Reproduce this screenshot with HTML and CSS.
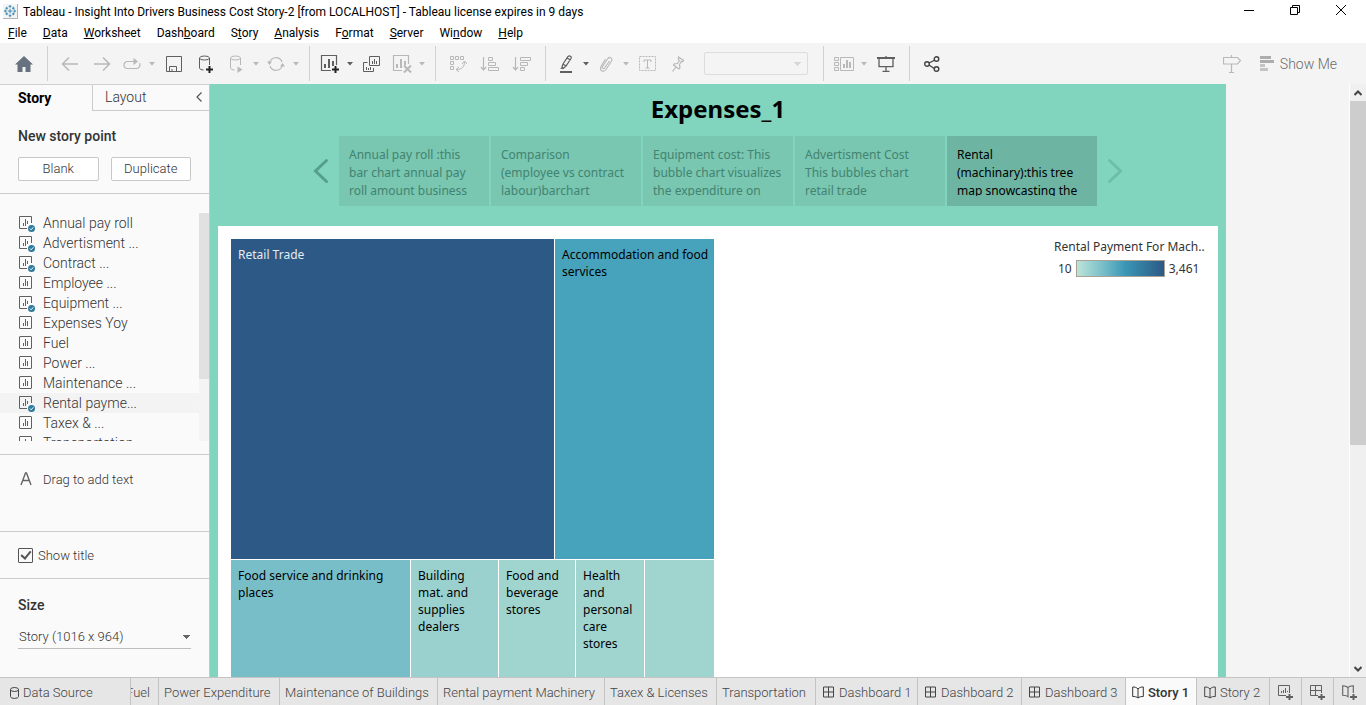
FILE: index.html
```html
<!DOCTYPE html>
<html lang="en">
<head>
<meta charset="utf-8">
<title>Tableau - Insight Into Drivers Business Cost Story-2</title>
<link rel="stylesheet" href="styles.css">
</head>
<body>
<svg class="defs" aria-hidden="true">
  <symbol id="caret" viewBox="0 0 6 4"><path d="M0 0h6L3 3.5z" fill="currentColor"/></symbol>
  <symbol id="sheet" viewBox="0 0 16 16"><rect x=".5" y=".5" width="12" height="12" rx=".5" fill="none" stroke="currentColor"/><path d="M4.500 7v3M6.500 3v7M8.500 5v5" stroke="currentColor" fill="none"/></symbol>
  <symbol id="sheet-used" viewBox="0 0 16 16"><path d="M8 12.500H.5V.5h12V7M4.500 7v3M6.500 3v7M8.500 5v3" stroke="currentColor" fill="none"/><circle cx="12.500" cy="12.500" r="3.500" fill="#2e7a9c"/><path d="M10.800 12.500l1.300 1.300 2.200-2.500" stroke="#fff" fill="none"/></symbol>
  <symbol id="dash" viewBox="0 0 12 12"><path d="M.5.5h10v10H.5zM5.500.5v10M.5 5.500h10" stroke="currentColor" fill="none"/></symbol>
  <symbol id="book" viewBox="0 0 12 13"><path d="M6 3C4.500 1.200 2.500 1 .7 1v9.500c2 0 4 .2 5.300 1.500C7.300 10.700 9.300 10.500 11.300 10.500V1C9.500 1 7.500 1.200 6 3zM6 3v9" stroke="currentColor" fill="none"/></symbol>
</svg>

<header class="titlebar">
  <svg class="logo" viewBox="0 0 16 16"><rect width="15" height="15" fill="#f4f4f4"/><path d="M15.500 0v15.500H0" stroke="#aaa" fill="none"/><path d="M7.500 5v5M5 7.500h5M7.500 1v3M6 2.500h3M7.500 11v3M6 12.500h3M2.500 6v3M1 7.500h3M12.500 6v3M11 7.500h3M4 3v3M2.500 4.500h3M11 3v3M9.500 4.500h3M4 9v3M2.500 10.500h3M11 9v3M9.500 10.500h3" stroke="#3384b5" fill="none"/></svg>
  <span class="caption">Tableau - Insight Into Drivers Business Cost Story-2 [from LOCALHOST] - Tableau license expires in 9 days</span>
  <div class="window-buttons">
    <button aria-label="Minimize"><svg width="12" height="12"><path d="M1 6.500h10" stroke="#000"/></svg></button>
    <button aria-label="Restore"><svg width="12" height="12"><path d="M1.500 3.500h7v7h-7zM3.500 3.500v-2h7v7h-2" stroke="#000" fill="none"/></svg></button>
    <button aria-label="Close"><svg width="12" height="12"><path d="M1 1l10 10M11 1L1 11" stroke="#000"/></svg></button>
  </div>
</header>

<nav class="menu">
  <button><u>F</u>ile</button><button><u>D</u>ata</button><button><u>W</u>orksheet</button><button>Dash<u>b</u>oard</button><button>S<u>t</u>ory</button><button><u>A</u>nalysis</button><button>F<u>o</u>rmat</button><button><u>S</u>erver</button><button>Wi<u>n</u>dow</button><button><u>H</u>elp</button>
</nav>

<div class="toolbar">
  <div class="group home">
    <button class="tool" aria-label="Start page"><svg width="18" height="16"><path d="M9 0L0 8.500h2.500V16h5v-5h3v5h5V8.500H18z" fill="#66727f"/></svg></button>
  </div>
  <div class="group off">
    <button class="tool" aria-label="Undo"><svg width="18" height="16"><path d="M17 8H2M8 1.500L1.500 8 8 14.500" stroke="currentColor" stroke-width="1.500" fill="none"/></svg></button>
    <button class="tool" aria-label="Redo"><svg width="18" height="16"><path d="M1 8h15M10 1.500L16.500 8 10 14.500" stroke="currentColor" stroke-width="1.500" fill="none"/></svg></button>
    <button class="tool mid" aria-label="Replay"><svg width="18" height="12"><path d="M12 3.500H4.500a3.500 3.500 0 0 0 0 7h9a3.500 3.500 0 0 0 3-5.200" stroke="currentColor" stroke-width="1.200" fill="none"/><path d="M10.500 0l4.500 3.500L10.500 7z" fill="currentColor"/></svg></button>
    <button class="drop" aria-label="Replay options"><svg><use href="#caret"/></svg></button>
    <button class="tool on" aria-label="Save"><svg width="16" height="16"><path d="M.5.5h15v15H.5zM3.500 15.500v-5h7v5M6 15.500V13" stroke="currentColor" fill="none"/></svg></button>
    <button class="tool on" aria-label="New data source"><svg width="16" height="18"><path d="M1.500 3v10c0 1 2 2 4 2M11.500 3v7" stroke="currentColor" fill="none"/><ellipse cx="6.500" cy="3" rx="5" ry="2" stroke="currentColor" fill="none"/><path d="M11.500 11v7M8 14.500h7" stroke="#222" stroke-width="2"/></svg></button>
    <button class="tool mid" aria-label="Pause updates"><svg width="14" height="18"><path d="M1.500 3v10c0 1 2 2 4 2M11.500 3v7" stroke="currentColor" fill="none"/><ellipse cx="6.500" cy="3" rx="5" ry="2" stroke="currentColor" fill="none"/><path d="M8.500 11.500l5 3-5 3.500z" fill="currentColor"/></svg></button>
    <button class="drop" aria-label="Update options"><svg><use href="#caret"/></svg></button>
    <button class="tool mid" aria-label="Refresh"><svg width="18" height="16"><path d="M2.500 7A6.500 6.500 0 0 1 15 6M15.500 9A6.500 6.500 0 0 1 3 10" stroke="currentColor" stroke-width="1.200" fill="none"/><path d="M0 5.500h5L2.500 9zM13 10.500h5L15.500 7z" fill="currentColor"/></svg></button>
    <button class="drop" aria-label="Refresh options"><svg><use href="#caret"/></svg></button>
  </div>
  <div class="group">
    <button class="tool mid" aria-label="New worksheet"><svg width="20" height="18"><path d="M11 15.500H1.500V.5h15V10" stroke="currentColor" stroke-width="1.200" fill="none"/><path d="M5 9v4M9 4v9M13 6v5" stroke="currentColor" stroke-width="2"/><path d="M15.500 11v7M12 14.500h7" stroke="#222" stroke-width="2"/></svg></button>
    <button class="drop" aria-label="New sheet options"><svg><use href="#caret"/></svg></button>
    <button class="tool" aria-label="Duplicate"><svg width="18" height="16"><path d="M6.500.5h10v9h-10zM4.500 6.500h-4v9h10V12M9.500 5v3M11.500 3v5M13.500 5v3M3.500 11v3M5.500 12v2M7.500 11v3" stroke="currentColor" fill="none"/></svg></button>
    <button class="tool mid faint" aria-label="Clear sheet"><svg width="20" height="18"><path d="M10 15.500H1.500V.5h15V9" stroke="currentColor" stroke-width="1.200" fill="none"/><path d="M5 9v4M9 4v9M13 6v4M12 10.500l7 7M19 10.500l-7 7" stroke="currentColor" stroke-width="2"/></svg></button>
    <button class="drop faint" aria-label="Clear options"><svg><use href="#caret"/></svg></button>
  </div>
  <div class="group off">
    <button class="tool" aria-label="Swap rows and columns"><svg width="18" height="18"><path d="M1.500 1.500h3v3h-3zM6.500 1.500h3v3h-3zM11.500 1.500h3v3h-3zM1.500 6.500h3v3h-3zM1.500 11.500h3v3h-3zM15.500 6.500c0 5-2 8-8 8M13 9l2.500-3L18 9M10 12l-3 2.500 3 2.500" stroke="currentColor" fill="none"/></svg></button>
    <button class="tool" aria-label="Sort ascending"><svg width="20" height="16"><path d="M3.500 1v13M1 11l2.500 3L6 11" stroke="currentColor" stroke-width="1.200" fill="none"/><path d="M8.500 1.500h4v3h-4zM8.500 6.500h7v3h-7zM8.500 11.500h10v3h-10z" stroke="currentColor" fill="none"/></svg></button>
    <button class="tool" aria-label="Sort descending"><svg width="20" height="16"><path d="M3.500 1v13M1 11l2.500 3L6 11" stroke="currentColor" stroke-width="1.200" fill="none"/><path d="M8.500 1.500h10v3h-10zM8.500 6.500h7v3h-7zM8.500 11.500h4v3h-4z" stroke="currentColor" fill="none"/></svg></button>
  </div>
  <div class="group off">
    <button class="tool mid on" aria-label="Highlight"><svg width="14" height="18"><path d="M3 12l1-3 5-7.500c1.500-1.500 4 0 3 2L7 11l-3 2.500zM4 9l3 2M8 3l3.500 2" stroke="currentColor" stroke-width="1.200" fill="none"/><path d="M1 14l2-2 1 1.500zM1 16h12v2H1z" fill="currentColor"/></svg></button>
    <button class="drop on" aria-label="Highlight options"><svg><use href="#caret"/></svg></button>
    <button class="tool mid" aria-label="Group members"><svg width="14" height="16"><path d="M10.500 5L5.500 12c-1 1.500-3 0-2-1.500l5-7.500c1.500-3 5.500-1 4 2L7 13.500c-2.500 3.500-7 1-5-3L6.500 3" stroke="currentColor" stroke-width="1.100" fill="none"/></svg></button>
    <button class="drop" aria-label="Group options"><svg><use href="#caret"/></svg></button>
    <button class="tool" aria-label="Show mark labels"><svg width="18" height="16"><path d="M.5.5h16v14H.5z" stroke="currentColor" stroke-dasharray="2 1" fill="none"/><path d="M5 6V4h7v2M8.500 4v8M6.500 12h4" stroke="currentColor" fill="none"/></svg></button>
    <button class="tool mid" aria-label="Fix axes"><svg width="14" height="16"><path d="M7.500 1l5 3.500-.8 1.300-1.400-.3-1.800 3 .5 3.300-1 1.200L2.500 9l.8-1.200 3.200-.3 1.800-3-1-1.500zM5 11L1.500 15.500" stroke="currentColor" stroke-width="1.200" fill="none"/></svg></button>
    <select class="fit" aria-label="Fit" disabled><option></option></select>
  </div>
  <div class="group off">
    <button class="tool mid" aria-label="Show cards"><svg width="20" height="16"><path d="M.5 1.500h4v3h-4zM.5 6.500h4v3h-4zM.5 11.500h4v3h-4zM6.500 1.500h13v13h-13z" stroke="currentColor" fill="none"/><path d="M10 8v4M13 4v8M16 6v6" stroke="currentColor" stroke-width="2"/></svg></button>
    <button class="drop" aria-label="Card options"><svg><use href="#caret"/></svg></button>
    <button class="tool on" aria-label="Presentation mode"><svg width="18" height="16"><path d="M0 1h18v2H0z" fill="currentColor"/><path d="M2 2v8.500h14V2M9 0v15M5.500 15.500h7" stroke="currentColor" stroke-width="1.300" fill="none"/><path d="M3 3h12v7H3z" fill="#f4f4f4"/></svg></button>
  </div>
  <div class="group last">
    <button class="tool dark" aria-label="Share"><svg width="16" height="16"><path d="M5 7l6-3M5 9l6 4" stroke="currentColor" stroke-width="1.300"/><g fill="none" stroke="currentColor" stroke-width="1.400"><circle cx="3" cy="8" r="2.300"/><circle cx="12.500" cy="3" r="2.300"/><circle cx="12.500" cy="13" r="2.300"/></g></svg></button>
    <div class="right">
      <button class="tool faint" aria-label="Guide"><svg width="18" height="18"><path d="M8.500 0v2M8.500 9v8M6 17.500h5M.5 2.500h14l3 3-3 3.500H.5z" stroke="currentColor" stroke-width="1.200" fill="none"/></svg></button>
      <button class="showme"><svg width="14" height="15"><path d="M0 0h11v3H0zM0 4h14v3H0z" fill="#adadad"/><path d="M0 8h5v3H0zM0 12h8v3H0z" fill="#c4c4c4"/></svg>Show Me</button>
    </div>
  </div>
</div>

<main class="workspace">
  <aside class="side">
    <div class="side-tabs">
      <button class="current">Story</button>
      <button>Layout<svg width="6" height="10"><path d="M5.500.5L1 5l4.500 4.500" stroke="#555" stroke-width="1.200" fill="none"/></svg></button>
    </div>
    <section class="new-point">
      <h2>New story point</h2>
      <div class="pair"><button>Blank</button><button>Duplicate</button></div>
    </section>
    <section class="sheets">
      <ul>
        <li><svg><use href="#sheet-used"/></svg>Annual pay roll</li>
        <li><svg><use href="#sheet-used"/></svg>Advertisment ...</li>
        <li><svg><use href="#sheet-used"/></svg>Contract ...</li>
        <li><svg><use href="#sheet"/></svg>Employee ...</li>
        <li><svg><use href="#sheet-used"/></svg>Equipment ...</li>
        <li><svg><use href="#sheet"/></svg>Expenses Yoy</li>
        <li><svg><use href="#sheet"/></svg>Fuel</li>
        <li><svg><use href="#sheet"/></svg>Power ...</li>
        <li><svg><use href="#sheet"/></svg>Maintenance ...</li>
        <li class="hover"><svg><use href="#sheet-used"/></svg>Rental payme...</li>
        <li><svg><use href="#sheet"/></svg>Taxex &amp; ...</li>
        <li><svg><use href="#sheet"/></svg>Transportation</li>
      </ul>
      <div class="list-scroll"><div></div></div>
    </section>
    <section class="drag"><svg width="12" height="14"><path d="M1 13L5.500 1h1L11 13M2.800 8.500h6.400" stroke="#666" stroke-width="1.400" fill="none"/></svg>Drag to add text</section>
    <section class="show-title"><input type="checkbox" id="show-title" checked><label for="show-title">Show title</label></section>
    <section class="size">
      <h2><label for="size">Size</label></h2>
      <select id="size"><option>Story (1016 x 964)</option></select>
    </section>
  </aside>

  <div class="canvas">
    <article class="story">
      <h1>Expenses_1</h1>
      <div class="navigator">
        <button class="arrow prev" aria-label="Previous"><svg width="16" height="26"><path d="M13.500 2.500L2.500 13l11 10.500" stroke="currentColor" stroke-width="3" stroke-linecap="round" fill="none"/></svg></button>
        <button class="point"><span>Annual pay roll :this<br>bar chart annual pay<br>roll amount business</span></button>
        <button class="point"><span>Comparison<br>(employee vs contract<br>labour)barchart</span></button>
        <button class="point"><span>Equipment cost: This<br>bubble chart visualizes<br>the expenditure on</span></button>
        <button class="point"><span>Advertisment Cost<br>This bubbles chart<br>retail trade</span></button>
        <button class="point active"><span>Rental<br>(machinary):this tree<br>map snowcasting the</span></button>
        <button class="arrow next" aria-label="Next"><svg width="16" height="26"><path d="M2.500 2.500l11 10.500-11 10.500" stroke="currentColor" stroke-width="3" stroke-linecap="round" fill="none"/></svg></button>
      </div>
      <div class="view">
        <div class="treemap">
          <div class="tree-row top">
            <div class="cell c1">Retail Trade</div>
            <div class="cell c2">Accommodation and food services</div>
          </div>
          <div class="tree-row bottom">
            <div class="cell c3">Food service and drinking places</div>
            <div class="cell c4">Building mat. and supplies dealers</div>
            <div class="cell c5">Food and beverage stores</div>
            <div class="cell c5">Health and personal care stores</div>
            <div class="cell c5"></div>
          </div>
        </div>
        <div class="legend">
          <div class="legend-title">Rental Payment For Mach..</div>
          <div class="legend-scale"><span>10</span><div class="ramp"></div><span>3,461</span></div>
        </div>
      </div>
    </article>
  </div>
  <div class="scrollbar">
    <button aria-label="Scroll up"><svg width="8" height="6"><path d="M.5 5L4 1.500 7.500 5" stroke="#444" stroke-width="2" fill="none"/></svg></button>
    <div class="track"><div class="thumb"></div></div>
    <button aria-label="Scroll down"><svg width="8" height="6"><path d="M.5 1L4 4.500 7.500 1" stroke="#444" stroke-width="2" fill="none"/></svg></button>
  </div>
</main>

<nav class="tabs">
  <button class="source"><svg width="9" height="12"><path d="M.5 2.500v7c0 2.500 8 2.500 8 0v-7" stroke="currentColor" fill="none"/><ellipse cx="4.500" cy="2.500" rx="4" ry="2" stroke="currentColor" fill="none"/></svg>Data Source</button>
  <button class="cut"><span>Fuel</span></button>
  <button>Power Expenditure</button>
  <button>Maintenance of Buildings</button>
  <button>Rental payment Machinery</button>
  <button>Taxex &amp; Licenses</button>
  <button>Transportation</button>
  <button class="with-icon"><svg><use href="#dash"/></svg>Dashboard 1</button>
  <button class="with-icon"><svg><use href="#dash"/></svg>Dashboard 2</button>
  <button class="with-icon"><svg><use href="#dash"/></svg>Dashboard 3</button>
  <button class="with-icon selected"><svg><use href="#book"/></svg>Story 1</button>
  <button class="with-icon"><svg><use href="#book"/></svg>Story 2</button>
  <button class="new" aria-label="New worksheet"><svg width="16" height="16"><path d="M8 10.500H.5V.5h11V8M3.500 6v2M5.500 5v3M7.500 3v5M9.500 6v1" stroke="currentColor" fill="none"/><path d="M11.500 9v6M8 12h7" stroke="currentColor" stroke-width="2"/></svg></button>
  <button class="new" aria-label="New dashboard"><svg width="16" height="16"><path d="M8 10.500H.5V.5h11V8M5.500.5v10M.5 5.500h11" stroke="currentColor" fill="none"/><path d="M11.500 9v6M8 12h7" stroke="currentColor" stroke-width="2"/></svg></button>
  <button class="new" aria-label="New story"><svg width="16" height="16"><path d="M6 2.500C4.500 1 2.500.7.700.7v9.500c2 0 4 .2 5.300 1.500V2.500C7.300 1 9.300.7 11.300.7V8" stroke="currentColor" stroke-width="1.100" fill="none"/><path d="M11.500 9v6M8 12h7" stroke="currentColor" stroke-width="2"/></svg></button>
</nav>
</body>
</html>
```
FILE: styles.css
```css
* { box-sizing: border-box; }

body {
  margin: 0;
  height: 100vh;
  display: flex;
  flex-direction: column;
  overflow: hidden;
  background: #fff;
  color: #333;
  font-family: Roboto, "Liberation Sans", sans-serif;
  font-size: 13px;
  font-weight: 300;
}

button, select {
  font: inherit;
  color: inherit;
  background: none;
  border: 0;
  padding: 0;
}

h1, h2, ul { margin: 0; padding: 0; }
svg { flex: none; display: block; }
.defs { position: absolute; width: 0; height: 0; }

/* Window frame */
.titlebar {
  flex: none;
  display: flex;
  align-items: center;
  gap: 5px;
  height: 23px;
  padding-left: 3px;
  color: #000;
  font-size: 12px;
  font-weight: 400;
}
.logo { width: 15px; height: 15px; }
.window-buttons { display: flex; align-self: flex-start; margin-left: auto; padding-right: 2px; }
.window-buttons button {
  width: 46px;
  height: 20px;
  display: grid;
  place-items: center;
}

.menu {
  flex: none;
  display: flex;
  gap: 16px;
  height: 20px;
  padding-left: 8px;
  color: #000;
  font-size: 12px;
  font-weight: 400;
}

/* Toolbar */
.toolbar {
  flex: none;
  display: grid;
  grid-template-columns: 48px 262px 126px 110px 278px 86px 1fr;
  height: 41px;
  padding: 3px 0;
  background: #f4f4f4;
}
.group {
  display: flex;
  align-items: center;
  padding-left: 6px;
  border-right: 1px solid #d2d2d2;
  color: #5f5f5f;
}
.group.home { padding-left: 8px; }
.group.last { border-right: 0; }
.off, .faint { color: #b8b8b8; }
.on { color: #5f5f5f; }
.dark { color: #444; }
.tool {
  flex: none;
  width: 32px;
  height: 28px;
  display: grid;
  place-items: center;
}
.tool.mid { width: 28px; }
.drop {
  flex: none;
  width: 12px;
  height: 28px;
  display: grid;
  place-items: center;
}
.drop svg { width: 6px; height: 4px; }
.group.off .on, .group .faint { color: #5f5f5f; }
.group .faint, .group.off { color: #b8b8b8; }
.fit {
  width: 104px;
  height: 23px;
  margin-left: 12px;
  border: 1px solid #d4d4d4;
  border-radius: 2px;
  appearance: none;
  background: linear-gradient(225deg, #ccc 50%, transparent 50%) no-repeat right 9px center / 4px 4px,
    linear-gradient(135deg, #ccc 50%, transparent 50%) no-repeat right 5px center / 4px 4px;
}
.right { display: flex; align-items: center; margin-left: auto; padding-right: 29px; }
.showme {
  display: flex;
  align-items: center;
  gap: 6px;
  margin-left: 12px;
  color: #6b6b6b;
  font-size: 14px;
}

/* Workspace */
.workspace { flex: 1; display: flex; min-height: 0; }

.side {
  flex: none;
  width: 210px;
  background: #fafafa;
  border-right: 1px solid #c8c8c8;
  border-top: 1px solid #d0d0d0;
}
.side section { border-bottom: 1px solid #cbcbcb; }
.side h2 { color: #333; font-size: 14px; font-weight: 500; line-height: 20px; }
.side-tabs { display: grid; grid-template-columns: 92px 1fr; height: 26px; font-size: 14px; }
.side-tabs button {
  display: flex;
  align-items: center;
  justify-content: space-between;
  padding: 0 7px 1px 12px;
  border-left: 1px solid #cbcbcb;
  border-bottom: 1px solid #cbcbcb;
}
.side-tabs .current { padding-left: 18px; border: 0; color: #000; font-weight: 700; }

.new-point { height: 83px; padding: 15px 18px 0; }
.pair { display: grid; grid-template-columns: 1fr 1fr; gap: 12px; margin-top: 11px; }
.pair button { height: 24px; padding-bottom: 2px; background: #fff; border: 1px solid #c8c8c8; border-radius: 2px; }

.side .sheets { display: flex; height: 261px; padding: 19px 0 13px; }
.sheets ul { flex: 1; overflow: hidden; list-style: none; font-size: 14px; }
.sheets li { display: flex; gap: 8px; height: 20px; padding-left: 19px; line-height: 20px; }
.sheets li svg { width: 16px; height: 16px; margin-top: 3px; color: #606060; }
.sheets .hover { background: #f3f3f3; }
.list-scroll { width: 10px; background: #f4f4f4; }
.list-scroll div { height: 73%; background: #e1e1e1; }

.drag { display: flex; gap: 11px; height: 77px; padding: 17px 0 0 20px; line-height: 16px; }
.show-title { display: flex; align-items: center; gap: 5px; height: 47px; padding-left: 18px; }
.show-title input {
  appearance: none;
  width: 15px;
  height: 15px;
  margin: 0;
  border: 1px solid #555;
  border-radius: 1px;
  display: grid;
  place-items: center;
}
.show-title input::before {
  content: "";
  width: 4px;
  height: 8px;
  margin-bottom: 2px;
  border: solid #555;
  border-width: 0 2px 2px 0;
  transform: rotate(40deg);
}
.side .size { padding: 16px 18px 0; border-bottom: 0; }
.size select {
  width: 100%;
  height: 24px;
  margin-top: 10px;
  padding: 0 1px;
  border-bottom: 1px solid #bdbdbd;
  border-radius: 0;
  appearance: none;
  background: linear-gradient(135deg, #666 50%, transparent 50%) no-repeat right center / 4px 4px,
    linear-gradient(225deg, #666 50%, transparent 50%) no-repeat right 4px center / 4px 4px;
}

/* Story canvas */
.canvas { flex: 1; min-width: 0; overflow: hidden; background: #f4f4f4; }
.story {
  width: 1016px;
  height: 964px;
  display: flex;
  flex-direction: column;
  padding: 8px;
  background: #81d5bf;
  color: #000;
  font-family: "Noto Sans", sans-serif;
  font-weight: 400;
}
.story h1 { font-size: 24px; line-height: 34px; text-align: center; }
.navigator { display: flex; justify-content: center; gap: 2px; margin: 10px 0 20px; }
.point {
  width: 150px;
  height: 70px;
  padding: 10px 6px 10px 10px;
  background: #79c6b1;
  color: #438370;
  font-size: 12px;
  line-height: 18px;
  text-align: left;
}
.point span { display: block; height: 50px; overflow: hidden; white-space: nowrap; }
.point.active { background: #6db4a2; color: #000; }
.arrow { display: flex; align-items: center; width: 24px; color: #55a08d; }
.arrow.next { justify-content: flex-end; color: #6ebda8; }

.view { flex: 1; display: flex; justify-content: space-between; padding: 13px; background: #fff; }
.treemap {
  width: 483px;
  display: grid;
  grid-template-rows: 320px 1fr;
  gap: 1px;
  font-size: 12px;
  line-height: 17px;
}
.tree-row { display: grid; gap: 1px; }
.top { grid-template-columns: 323px 1fr; }
.bottom { grid-template-columns: 179px 87px 76px 68px 1fr; }
.cell { padding: 7px; }
.c1 { background: #2c5985; color: #e6ebf0; }
.c2 { background: #47a3bb; padding-right: 2px; }
.c3 { background: #78bec8; }
.c4 { background: #9ad1cf; }
.c5 { background: #a0d5cf; }

.legend { width: 151px; color: #333; font-size: 12px; line-height: 16px; white-space: nowrap; }
.legend-scale { display: flex; align-items: center; gap: 4px; margin-top: 5px; padding-left: 4px; }
.ramp {
  width: 89px;
  height: 17px;
  border: 1px solid #a8a194;
  background: linear-gradient(90deg, #bce4d8, #78bec8 30%, #3a97b6 55%, #2c5985);
}

.scrollbar {
  flex: none;
  width: 17px;
  display: flex;
  flex-direction: column;
  background: #f0f0f0;
  border-left: 1px solid #fff;
}
.scrollbar button { height: 17px; display: grid; place-items: center; }
.track { flex: 1; }
.thumb { height: 61.5%; background: #cdcdcd; }

/* Sheet tabs */
.tabs {
  flex: none;
  display: grid;
  grid-template-columns: 130px 28px 121px 158px 167px 112px 99px 102px 104px 104px 71px 73px 32px 32px 1fr;
  height: 28px;
  border-top: 1px solid #c4c4c4;
  background: #e6e6e6;
  color: #444;
}
.tabs button {
  display: flex;
  align-items: center;
  gap: 4px;
  padding: 2px 0 0 5px;
  border-left: 1px solid #c4c4c4;
  white-space: nowrap;
  overflow: hidden;
}
.tabs .source { padding-left: 10px; border-left: 0; }
.tabs .cut { justify-content: flex-end; padding-right: 8px; }
.tabs .with-icon { padding-left: 7px; }
.tabs .with-icon svg { width: 12px; height: 13px; }
.tabs .selected { background: #fafafa; color: #333; font-weight: 500; padding-left: 6px; }
.tabs .new { padding: 2px 0 0; justify-content: center; color: #606060; }
```
